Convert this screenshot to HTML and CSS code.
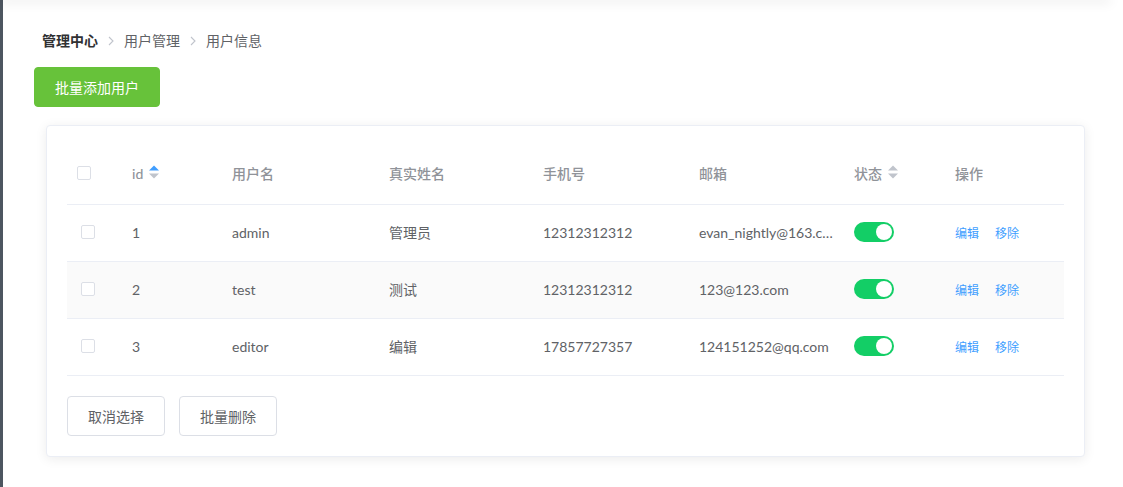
FILE: index.html
```html
<!DOCTYPE html>
<html lang="zh-CN">
<head>
<meta charset="utf-8">
<title>用户信息</title>
<link rel="stylesheet" href="styles.css">
</head>
<body>
<div class="app">
  <aside class="sidebar"></aside>
  <main class="main">
    <div class="topbar"></div>
    <div class="content">
      <nav class="breadcrumb">
        <span class="crumb strong">管理中心</span>
        <svg class="sep" width="8" height="10" viewBox="0 0 8 10"><path d="M2 1l4 4-4 4" fill="none" stroke="#c0c4cc" stroke-width="1.1"/></svg>
        <span class="crumb">用户管理</span>
        <svg class="sep" width="8" height="10" viewBox="0 0 8 10"><path d="M2 1l4 4-4 4" fill="none" stroke="#c0c4cc" stroke-width="1.1"/></svg>
        <span class="crumb">用户信息</span>
      </nav>
      <button class="btn btn-success">批量添加用户</button>
      <section class="card">
        <div class="table">
          <div class="row head">
            <div class="cell c-check"><span class="checkbox"></span></div>
            <div class="cell c-id">id <svg class="caret" width="10" height="14" viewBox="0 0 10 14"><path d="M0 5.5L5 0.5 10 5.5z" fill="#409eff"/><path d="M0 8.5L5 13.5 10 8.5z" fill="#c0c4cc"/></svg></div>
            <div class="cell c-user">用户名</div>
            <div class="cell c-real">真实姓名</div>
            <div class="cell c-phone">手机号</div>
            <div class="cell c-mail">邮箱</div>
            <div class="cell c-state">状态 <svg class="caret" width="10" height="14" viewBox="0 0 10 14"><path d="M0 5.5L5 0.5 10 5.5z" fill="#c0c4cc"/><path d="M0 8.5L5 13.5 10 8.5z" fill="#c0c4cc"/></svg></div>
            <div class="cell c-op">操作</div>
          </div>
          <div class="row">
            <div class="cell c-check body-check"><span class="checkbox"></span></div>
            <div class="cell c-id">1</div>
            <div class="cell c-user">admin</div>
            <div class="cell c-real">管理员</div>
            <div class="cell c-phone">12312312312</div>
            <div class="cell c-mail"><span class="ellipsis">evan_nightly@163.com</span></div>
            <div class="cell c-state"><span class="switch"><span class="knob"></span></span></div>
            <div class="cell c-op"><a class="link">编辑</a><a class="link">移除</a></div>
          </div>
          <div class="row striped">
            <div class="cell c-check body-check"><span class="checkbox"></span></div>
            <div class="cell c-id">2</div>
            <div class="cell c-user">test</div>
            <div class="cell c-real">测试</div>
            <div class="cell c-phone">12312312312</div>
            <div class="cell c-mail"><span class="ellipsis">123@123.com</span></div>
            <div class="cell c-state"><span class="switch"><span class="knob"></span></span></div>
            <div class="cell c-op"><a class="link">编辑</a><a class="link">移除</a></div>
          </div>
          <div class="row">
            <div class="cell c-check body-check"><span class="checkbox"></span></div>
            <div class="cell c-id">3</div>
            <div class="cell c-user">editor</div>
            <div class="cell c-real">编辑</div>
            <div class="cell c-phone">17857727357</div>
            <div class="cell c-mail"><span class="ellipsis">124151252@qq.com</span></div>
            <div class="cell c-state"><span class="switch"><span class="knob"></span></span></div>
            <div class="cell c-op"><a class="link">编辑</a><a class="link">移除</a></div>
          </div>
        </div>
        <div class="actions">
          <button class="btn btn-plain">取消选择</button>
          <button class="btn btn-plain">批量删除</button>
        </div>
      </section>
    </div>
  </main>
</div>
</body>
</html>
```
FILE: styles.css
```css
* { box-sizing: border-box; }
html, body { margin: 0; padding: 0; background: #fff; }
body {
  font-family: Lato, "Noto Sans CJK SC", "Noto Sans", sans-serif;
  font-size: 14px;
  color: #606266;
  overflow: hidden;
}
.app { display: flex; height: 487px; }
.sidebar { width: 3px; flex: none; background: #4d5660; }
.main { flex: 1; display: flex; flex-direction: column; min-width: 0; }
.topbar {
  height: 0;
  margin-right: 14px;
  box-shadow: 0 0 12px 2px rgba(0, 0, 0, 0.12);
}
.content { padding: 32px 0 0 31px; }
.breadcrumb {
  display: flex;
  align-items: center;
  height: 18px;
  margin-left: 8px;
  line-height: 18px;
  font-size: 14px;
}
.crumb { color: #606266; }
.crumb.strong { color: #303133; font-weight: 700; }
.sep { margin: 0 9px; }
.btn {
  display: inline-flex;
  align-items: center;
  justify-content: center;
  height: 40px;
  padding: 0 20px;
  border-radius: 4px;
  font-family: inherit;
  font-size: 14px;
  cursor: pointer;
}
.btn-success {
  margin-top: 17px;
  background: #67c23a;
  border: 1px solid #67c23a;
  color: #fff;
}
.btn-plain {
  background: #fff;
  border: 1px solid #dcdfe6;
  color: #606266;
}
.card {
  width: 1039px;
  margin: 18px 0 0 12px;
  padding: 20px;
  border: 1px solid #ebeef5;
  border-radius: 4px;
  background: #fff;
  box-shadow: 0 2px 12px 0 rgba(0, 0, 0, 0.08);
}
.table { width: 997px; }
.row {
  display: flex;
  height: 57px;
  padding-bottom: 2px;
  border-bottom: 1px solid #ebeef5;
  align-items: center;
}
.row.head { height: 59px; padding-bottom: 4px; }
.row.striped { background: #fafafa; }
.cell {
  padding-left: 10px;
  display: flex;
  align-items: center;
  white-space: nowrap;
  overflow: hidden;
}
.head .cell { color: #909399; font-weight: 500; }
.c-check { width: 55px; }
.body-check { padding-left: 14px; }
.c-id { width: 100px; }
.c-user { width: 157px; }
.c-real { width: 154px; }
.c-phone { width: 156px; }
.c-mail { width: 155px; padding-right: 10px; }
.c-state { width: 101px; }
.c-op { flex: 1; }
.caret { margin-left: 6px; }
.head .c-id .caret, .head .c-state .caret { margin-top: -3px; }
.checkbox {
  display: inline-block;
  width: 14px;
  height: 14px;
  border: 1px solid #dcdfe6;
  border-radius: 2px;
  background: #fff;
}
.ellipsis { display: block; overflow: hidden; text-overflow: ellipsis; }
.switch {
  position: relative;
  display: inline-block;
  width: 40px;
  height: 20px;
  border-radius: 10px;
  background: #13ce66;
}
.knob {
  position: absolute;
  top: 2px;
  right: 2px;
  width: 16px;
  height: 16px;
  border-radius: 50%;
  background: #fff;
}
.link { color: #409eff; font-size: 12px; cursor: pointer; }
.link + .link { margin-left: 16px; }
.actions { display: flex; gap: 14px; margin-top: 20px; }
```
